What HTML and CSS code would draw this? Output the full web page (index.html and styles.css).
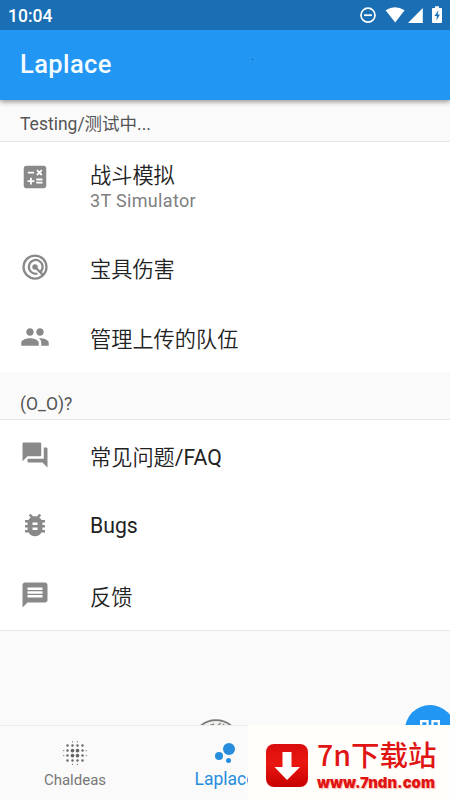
FILE: index.html
```html
<!DOCTYPE html>
<html lang="zh-CN">
<head>
<meta charset="utf-8">
<title>Laplace</title>
<link rel="stylesheet" href="styles.css">
</head>
<body>
<div class="screen">
  <header class="top">
    <div class="status">
      <span class="clock">10:04</span>
      <svg class="status-icons" width="90" height="30" viewBox="0 0 90 30">
        <circle cx="8" cy="15.2" r="7" fill="none" stroke="#fff" stroke-width="1.7"/>
        <path d="M4 15.2h8" stroke="#fff" stroke-width="1.8"/>
        <path fill="#fff" d="M25.6 10.2Q35 4.4 44.6 10.2L35.2 22.5zM62.8 8v15H48zM73 8h2V6.200h4V8h2q1 0 1 1v13q0 1-1 1h-8q-1 0-1-1V9q0-1 1-1z"/>
        <path fill="#1a6fb4" d="M78.500 10l-4 6h2.400l-.5 4.500 3.500-6h-2.300z"/>
      </svg>
    </div>
    <div class="appbar"><h1>Laplace</h1><i class="speck"></i></div>
  </header>

  <main class="content">
    <h2 class="section first">Testing/测试中...</h2>
    <ul class="list">
      <li class="row tall">
        <svg class="icon" viewBox="0 0 24 24"><path fill-rule="evenodd" d="M19 3H5c-1.100 0-2 .9-2 2v14c0 1.100.9 2 2 2h14c1.100 0 2-.9 2-2V5c0-1.100-.9-2-2-2zm-5.970 4.060L14.090 6l1.410 1.410L16.910 6l1.060 1.060-1.410 1.410 1.410 1.410-1.060 1.060-1.410-1.400-1.410 1.410-1.060-1.060 1.410-1.410-1.410-1.420zM6.250 7.720h5v1.500h-5v-1.500zM11.500 16h-2v2H8v-2H6v-1.500h2v-2h1.500v2h2V16zm6.500 1.250h-5v-1.500h5v1.500zm0-2.500h-5v-1.500h5v1.500z"/></svg>
        <div class="label">战斗模拟<small>3T Simulator</small></div>
      </li>
      <li class="row">
        <svg class="icon" viewBox="0 0 24 24"><g fill="none" stroke="currentColor" stroke-width="1.800"><circle cx="12" cy="12" r="9.200"/><path d="M16 16.200A5.500 5.500 0 1 0 14 17.200M12 12l6.500 6.500"/></g><circle cx="12" cy="12" r="2.200"/></svg>
        <div class="label">宝具伤害</div>
      </li>
      <li class="row">
        <svg class="icon people" viewBox="0 0 24 24"><path d="M16 11c1.660 0 2.990-1.340 2.990-3S17.660 5 16 5c-1.660 0-3 1.340-3 3s1.340 3 3 3zm-8 0c1.660 0 2.990-1.340 2.990-3S9.660 5 8 5C6.340 5 5 6.340 5 8s1.340 3 3 3zm0 2c-2.330 0-7 1.170-7 3.500V19h14v-2.500c0-2.330-4.670-3.500-7-3.500zm8 0c-.29 0-.62.02-.97.05 1.160.84 1.970 1.970 1.970 3.450V19h6v-2.500c0-2.330-4.670-3.500-7-3.500z"/></svg>
        <div class="label">管理上传的队伍</div>
      </li>
    </ul>

    <h2 class="section">(O_O)?</h2>
    <ul class="list last">
      <li class="row">
        <svg class="icon" viewBox="0 0 24 24"><path d="M21 6h-2v9H6v2c0 .55.45 1 1 1h11l4 4V7c0-.55-.45-1-1-1zm-4 6V3c0-.55-.45-1-1-1H3c-.55 0-1 .45-1 1v14l4-4h10c.55 0 1-.45 1-1z"/></svg>
        <div class="label">常见问题<span class="latin-part">/FAQ</span></div>
      </li>
      <li class="row">
        <svg class="icon" viewBox="0 0 24 24"><path d="M20 8h-2.810c-.45-.78-1.070-1.450-1.820-1.960L17 4.410 15.590 3l-2.170 2.170C12.960 5.060 12.490 5 12 5s-.96.06-1.410.17L8.410 3 7 4.410l1.620 1.630C7.880 6.550 7.260 7.220 6.810 8H4v2h2.090c-.05.33-.09.66-.09 1v1H4v2h2v1c0 .34.04.67.09 1H4v2h2.810c1.040 1.790 2.970 3 5.190 3s4.150-1.210 5.190-3H20v-2h-2.090c.05-.33.09-.66.09-1v-1h2v-2h-2v-1c0-.34-.04-.67-.09-1H20V8zm-6 8h-4v-2h4v2zm0-4h-4v-2h4v2z"/></svg>
        <div class="label latin">Bugs</div>
      </li>
      <li class="row">
        <svg class="icon" viewBox="0 0 24 24"><path d="M20 2H4c-1.100 0-1.990.9-1.990 2L2 22l4-4h14c1.100 0 2-.9 2-2V4c0-1.100-.9-2-2-2zm-2 12H6v-2h12v2zm0-3H6V9h12v2zm0-3H6V6h12v2z"/></svg>
        <div class="label">反馈</div>
      </li>
    </ul>
    <div class="space">
      <svg class="emblem" viewBox="0 0 50 50"><circle cx="25" cy="25" r="23.800" fill="#f1f1ec" stroke="#777" stroke-width="1.700"/><path d="M18 7l5-2M27 6l3-2M31 8l2-3" stroke="#888" stroke-width="1.500"/></svg>
      <div class="fab"><svg width="30" height="30" viewBox="0 0 30 30" fill="none" stroke="#fff" stroke-width="2.300"><path d="M6.200 6.200h6.300v6.300H6.200zM17.500 6.200h6.300v6.300h-6.300zM6.200 17.500h6.300v6.300H6.200zM17.500 17.500h6.300v6.300h-6.300z"/></svg></div>
    </div>
  </main>

  <nav class="tabs">
    <div class="tab">
      <svg class="tab-icon" viewBox="0 0 24 24"><g fill="none" stroke="#666" stroke-linecap="round"><path stroke-width="1" d="M10 3h0M14 3h0M10 21h0M14 21h0M3 10h0M3 14h0M21 10h0M21 14h0"/><path stroke-width="2" d="M6 6h0M10 6h0M14 6h0M18 6h0M6 10h0M18 10h0M6 14h0M18 14h0M6 18h0M10 18h0M14 18h0M18 18h0"/><path stroke-width="3" d="M10 10h0M14 10h0M10 14h0M14 14h0"/></g></svg>
      <span>Chaldeas</span>
    </div>
    <div class="tab active">
      <svg class="tab-icon" viewBox="0 0 24 24"><circle cx="7.200" cy="14.400" r="3.200"/><circle cx="14.800" cy="18" r="2"/><circle cx="15.200" cy="8.800" r="4.800"/></svg>
      <span>Laplace</span>
    </div>
    <div class="tab"></div>
  </nav>

  <aside class="brand">
    <svg class="brand-logo" width="42" height="43" viewBox="0 0 42 43"><defs><linearGradient id="red" x2="0" y2="1"><stop stop-color="#d90d0d"/><stop offset=".45" stop-color="#ea1711"/><stop offset="1" stop-color="#c70000"/></linearGradient></defs><rect width="42" height="43" rx="8" fill="url(#red)"/><path fill="#fff" d="M16.500 8h9v15H34L21 36 8.500 23h8z"/></svg>
    <div class="brand-text"><div class="brand-name">7n下载站</div><div class="brand-url">www.7ndn.com</div></div>
  </aside>
</div>
</body>
</html>
```
FILE: styles.css
```css
* { box-sizing: border-box; }
body { margin: 0; font-family: Roboto, "Noto Sans CJK SC", sans-serif; }
h1, h2, ul { margin: 0; padding: 0; font-weight: 400; }
.screen { position: relative; width: 450px; height: 800px; overflow: hidden; display: flex; flex-direction: column; background: #fafafa; }
.top { position: relative; z-index: 1; background: #2196f3; box-shadow: 0 2px 5px rgba(0, 0, 0, .4); }
.status { height: 30px; padding-left: 8px; display: flex; justify-content: space-between; align-items: center; background: #1a6fb4; color: #fff; }
.clock { font-size: 17.5px; font-weight: 500; line-height: 30px; padding-top: 1px; }
.appbar { position: relative; height: 70px; padding: 0 20px; display: flex; align-items: center; color: #f3fbff; }
.appbar h1 { font-size: 25.5px; font-weight: 500; letter-spacing: .4px; line-height: 30px; padding-bottom: 2px; }
.speck { position: absolute; left: 252px; top: 29px; width: 1px; height: 1px; background: #114c7b; }
.content { flex: 1; display: flex; flex-direction: column; min-height: 0; }
.section { height: 48px; padding: 15px 20px 0; border-bottom: 1px solid #e6e6e6; font-size: 17.5px; line-height: 34px; color: #555; }
.section.first { height: 42px; padding-top: 7px; }
.list { list-style: none; background: #fff; }
.list.last { border-bottom: 1px solid #e6e6e6; }
.row { height: 70px; padding-left: 20px; display: flex; align-items: center; }
.row.tall { height: 90px; }
.icon { width: 30px; height: 30px; margin-right: 40px; flex: none; fill: #898989; color: #898989; }
.row.tall .icon { margin-bottom: 20px; }
.label { font-size: 21.2px; line-height: 28px; color: #222; padding-top: 6px; font-weight: 350; }
.row.tall .label { padding-top: 0; }
.label.latin { padding-top: 1px; font-weight: 400; }
.latin-part { font-weight: 400; }
.label small { display: block; font-size: 18px; line-height: 24px; letter-spacing: .33px; color: #808080; font-weight: 400; margin-top: -1px; }
.space { flex: 1; position: relative; overflow: hidden; }
.emblem { position: absolute; left: 191px; top: 88px; width: 50px; height: 50px; }
.fab { position: absolute; left: 405px; top: 74px; width: 50px; height: 50px; border-radius: 50%; background: #2196f3; padding: 10px; }
.tabs { height: 75px; border-top: 1px solid #ededed; display: grid; grid-template-columns: repeat(3, 1fr); }
.tab { display: flex; flex-direction: column; align-items: center; padding-top: 12px; color: #777; font-size: 15px; line-height: 20px; }
.tab-icon { width: 30px; height: 30px; margin-bottom: 2px; }
.tab.active { color: #268ddd; fill: #268ddd; font-size: 17.5px; line-height: 18px; }
.brand { position: absolute; left: 248px; top: 725px; width: 202px; height: 75px; background: #fffefa; padding: 19px 0 0 18px; display: flex; color: #e11414; }
.brand-logo { flex: none; }
.brand-text { margin-left: 9px; margin-top: -7px; }
.brand-name { font: 500 28.5px/34px "Noto Sans CJK SC", sans-serif; white-space: nowrap; }
.brand-url { font: 900 14.8px/18px Inter, "Liberation Sans", sans-serif; letter-spacing: .05px; margin-top: 3px; text-shadow: 1px 1px 1px #ffb7b0; }
```
